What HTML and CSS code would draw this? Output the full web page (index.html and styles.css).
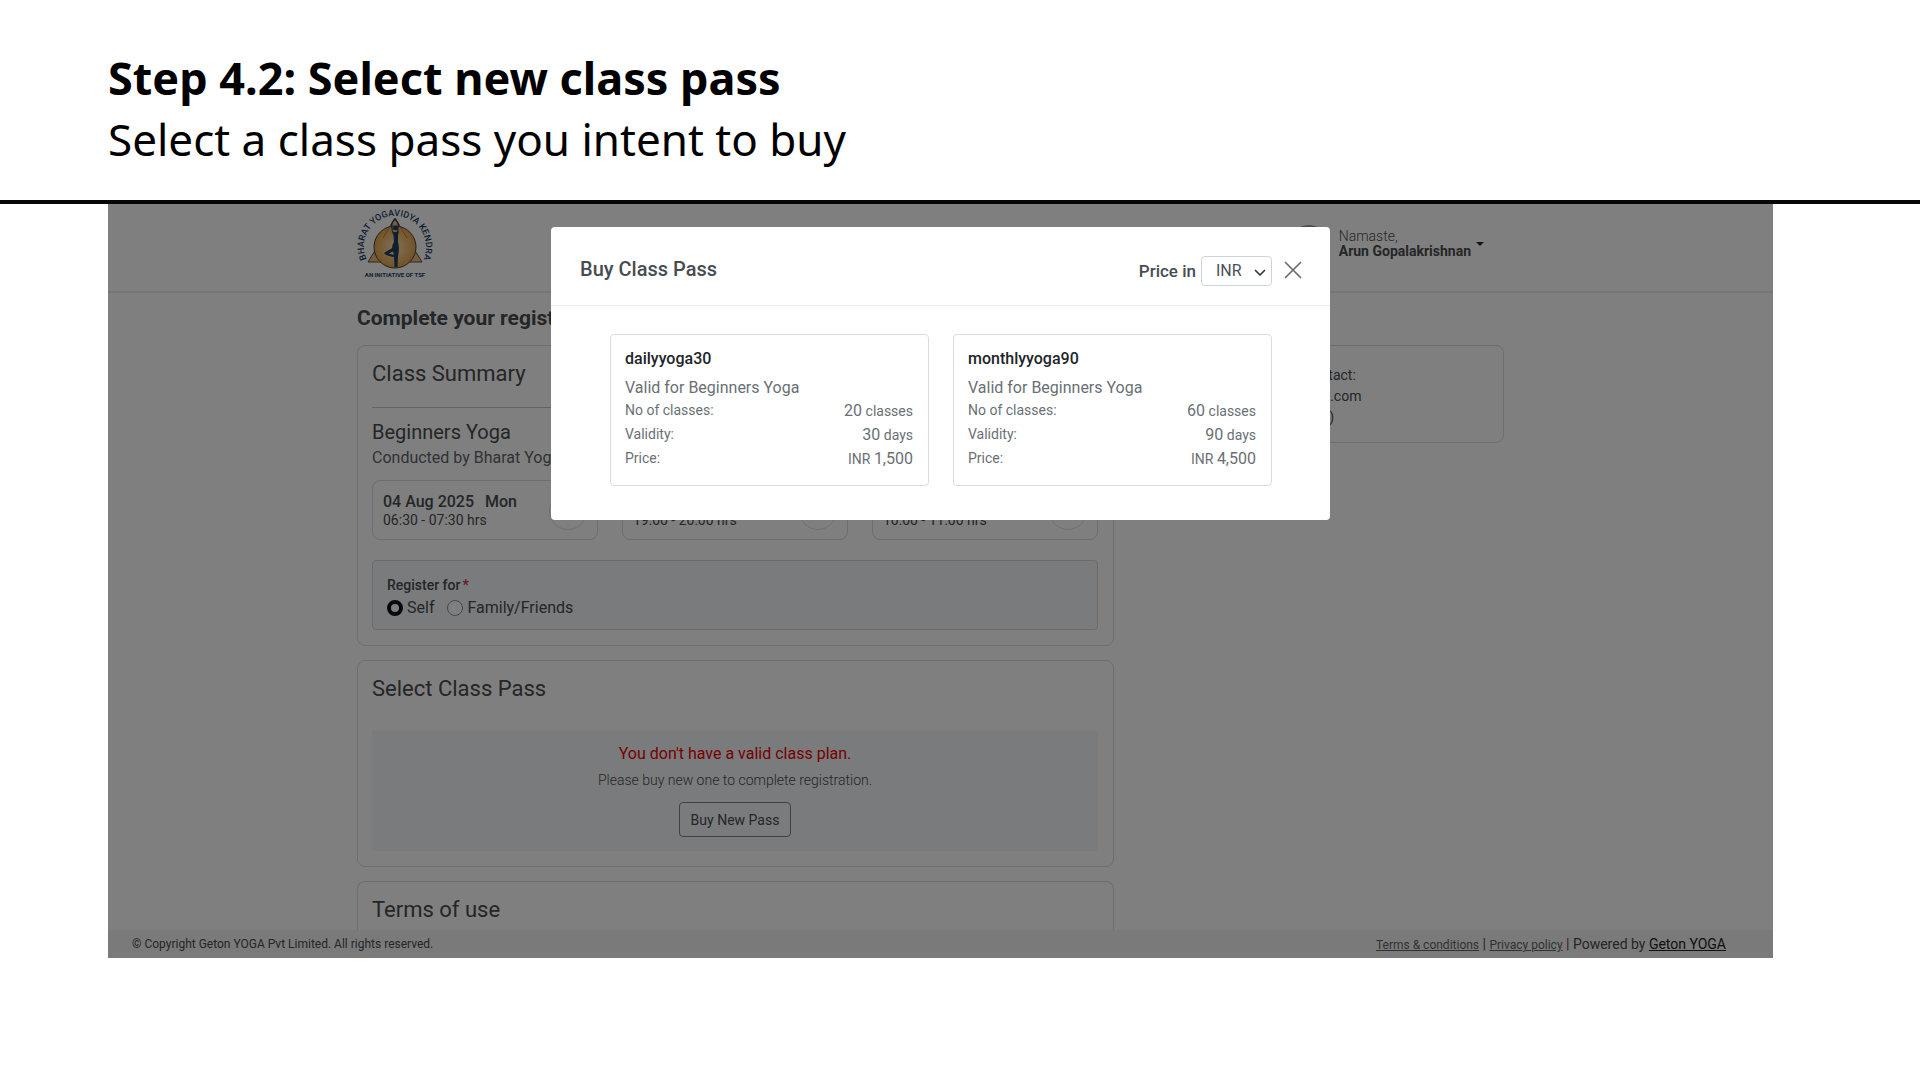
FILE: index.html
```html
<!DOCTYPE html>
<html lang="en">
<head>
<meta charset="utf-8">
<meta name="viewport" content="width=device-width, initial-scale=1">
<title>Step 4.2: Select new class pass</title>
<link rel="stylesheet" href="styles.css">
</head>
<body>
<header class="slide-head">
  <h1 class="slide-title">Step 4.2: Select new class pass</h1>
  <p class="slide-subtitle">Select a class pass you intent to buy</p>
</header>

<main class="app">
  <div class="topbar">
    <div class="container topbar-row">
      <a class="logo" href="#" aria-label="Bharat Yogavidya Kendra">
        <svg width="78" height="74" viewBox="0 0 78 74">
          <defs>
            <path id="arc" d="M11.200 56.500A31 31 0 1 1 64.800 56.500"/>
            <radialGradient id="sun"><stop offset="0" stop-color="#ffe2b0"/><stop offset="1" stop-color="#e5a54c"/></radialGradient>
          </defs>
          <path d="M38 12L65 56H11Z" fill="#e9bd80" stroke="#6d4a2c"/>
          <circle cx="38" cy="41" r="21" fill="url(#sun)" stroke="#4d4038"/>
          <path d="M38 12L50 32M38 12L26 32" fill="none" stroke="#a8713c" stroke-width=".8"/>
          <path d="M35.500 24Q33 17 38 13.500Q43 17 40.500 24" fill="none" stroke="#1d3f63" stroke-width="1.200"/>
          <circle cx="38.300" cy="22" r="2.300" fill="#1d3f63"/>
          <path d="M34.500 23Q35 27 36.500 29L37 36Q35 39 35.200 42L27 47Q29 50 37 51L37.500 61H40.500L41 50Q42.800 42 41 36L41 29Q42 27 41.500 23L39.500 26H36.500ZM36 45.500L37 49L31.500 47.400Z" fill="#1d3f63" fill-rule="evenodd"/>
          <text class="logo-arc"><textPath href="#arc" startOffset="50%" text-anchor="middle">BHARAT YOGAVIDYA KENDRA</textPath></text>
          <text class="logo-foot" x="38" y="71" text-anchor="middle">AN INITIATIVE OF TSF</text>
        </svg>
      </a>
      <div class="user">
        <span class="avatar"></span>
        <div class="user-name"><span>Namaste,</span><strong>Arun Gopalakrishnan</strong></div>
        <span class="caret"></span>
      </div>
    </div>
  </div>

  <div class="container">
    <h2 class="page-title">Complete your registration</h2>
    <div class="columns">
      <div class="main-col">
        <section class="card summary">
          <h3 class="card-title">Class Summary</h3>
          <hr class="rule">
          <h4 class="class-name">Beginners Yoga</h4>
          <p class="conducted">Conducted by Bharat Yogavidya Kendra</p>
          <div class="slots">
            <div class="slot"><div><p class="slot-date">04 Aug 2025 <span>Mon</span></p><p class="slot-time">06:30 - 07:30 hrs</p></div><span class="slot-ring"></span></div>
            <div class="slot"><div><p class="slot-date">05 Aug 2025 <span>Tue</span></p><p class="slot-time">19:00 - 20:00 hrs</p></div><span class="slot-ring"></span></div>
            <div class="slot"><div><p class="slot-date">06 Aug 2025 <span>Wed</span></p><p class="slot-time">10:00 - 11:00 hrs</p></div><span class="slot-ring"></span></div>
          </div>
          <fieldset class="register">
            <legend class="register-legend">Register for<b>*</b></legend>
            <div class="options">
              <label class="option"><input type="radio" name="who" checked>Self</label>
              <label class="option"><input type="radio" name="who">Family/Friends</label>
            </div>
          </fieldset>
        </section>
        <section class="card pass">
          <h3 class="card-title">Select Class Pass</h3>
          <div class="notice">
            <p class="notice-error">You don't have a valid class plan.</p>
            <p class="notice-hint">Please buy new one to complete registration.</p>
            <button class="buy" type="button">Buy New Pass</button>
          </div>
        </section>
        <section class="card terms"><h3 class="card-title">Terms of use</h3></section>
      </div>
      <aside class="card contact">
        <p>For registration queries, contact:</p>
        <p>E-mail : support@getonyoga.com</p>
        <p>Phone support (10am - 6pm)</p>
      </aside>
    </div>
  </div>

  <footer class="footer">
    <span>© Copyright Geton YOGA Pvt Limited. All rights reserved.</span>
    <span class="powered"><a class="small-link" href="#">Terms &amp; conditions</a> | <a class="small-link" href="#">Privacy policy</a> | Powered by <a href="#">Geton YOGA</a></span>
  </footer>

  <div class="backdrop">
    <div class="modal" role="dialog" aria-labelledby="modal-title">
      <div class="modal-head">
        <h2 class="modal-title" id="modal-title">Buy Class Pass</h2>
        <label class="price-label" for="currency">Price in</label>
        <span class="select-wrap">
          <select id="currency" class="currency"><option>INR</option><option>USD</option></select>
          <svg class="chevron" width="12" height="8" viewBox="0 0 12 8"><path d="M1.500 1.500L6 6L10.500 1.500" fill="none" stroke="#343a40" stroke-width="1.700" stroke-linecap="round" stroke-linejoin="round"/></svg>
        </span>
        <button class="close" type="button" aria-label="Close"><svg width="18" height="18" viewBox="0 0 18 18"><path d="M1.500 1.500L16.500 16.500M16.500 1.500L1.500 16.500" stroke="#6c6c6c" stroke-width="1.700" stroke-linecap="round"/></svg></button>
      </div>
      <div class="modal-body">
        <article class="plan">
          <h3 class="plan-name">dailyyoga30</h3>
          <p class="plan-valid">Valid for Beginners Yoga</p>
          <dl class="plan-rows">
            <div><dt>No of classes:</dt><dd><b>20</b> classes</dd></div>
            <div><dt>Validity:</dt><dd><b>30</b> days</dd></div>
            <div><dt>Price:</dt><dd>INR <b>1,500</b></dd></div>
          </dl>
        </article>
        <article class="plan">
          <h3 class="plan-name">monthlyyoga90</h3>
          <p class="plan-valid">Valid for Beginners Yoga</p>
          <dl class="plan-rows">
            <div><dt>No of classes:</dt><dd><b>60</b> classes</dd></div>
            <div><dt>Validity:</dt><dd><b>90</b> days</dd></div>
            <div><dt>Price:</dt><dd>INR <b>4,500</b></dd></div>
          </dl>
        </article>
      </div>
    </div>
  </div>
</main>
</body>
</html>
```
FILE: styles.css
```css
* { box-sizing: border-box; }
body { margin: 0; background: #fff; color: #212529; font-family: Roboto, "Liberation Sans", sans-serif; font-size: 16px; }
h1, h2, h3, h4, p, dl, dd { margin: 0; }
button, select, input { font: inherit; }

/* Slide heading */
.slide-head { padding: 47px 108px 31px; border-bottom: 4px solid #060808; color: #000; font-family: "Noto Sans", sans-serif; }
.slide-title { font-size: 45px; line-height: 62px; font-weight: 700; }
.slide-subtitle { font-size: 44px; line-height: 60px; font-weight: 400; }

/* App frame */
.app { position: relative; margin: 0 147px 0 108px; background: #fff; color: #484c50; }
.app .container { width: calc(100% - 498px); max-width: 1167px; margin: 0 auto; padding-right: 20px; }

.topbar { height: 89px; border-bottom: 2px solid #e9ecef; }
.topbar-row { display: flex; justify-content: space-between; align-items: flex-start; padding-top: 2px; }
.logo { display: block; }
.logo svg { display: block; overflow: visible; }
.logo-arc { font: 500 9px Roboto, sans-serif; fill: #1d3f63; }
.logo-foot { font: 700 6px Roboto, sans-serif; fill: #1d3f63; }
.user { display: flex; align-items: flex-start; padding: 18px 20px 0 0; }
.avatar { width: 40px; height: 40px; margin: 1px 10px 0 0; border-radius: 50%; background: #999; }
.user-name { display: flex; flex-direction: column; padding-top: 5px; font-size: 14px; line-height: 15px; font-weight: 300; }
.user-name strong { font-weight: 700; }
.caret { margin: 18px 0 0 5px; border: 4px solid transparent; border-top-color: #212529; border-bottom: 0; }

.page-title { padding: 13px 0 15px; font-size: 21px; line-height: 24px; font-weight: 700; }
.columns { display: flex; gap: 20px; align-items: flex-start; }
.main-col { flex: 0 0 757px; display: flex; flex-direction: column; gap: 14px; }
.card { border: 1px solid #d9dcdf; border-radius: 8px; padding: 0 15px 0 14px; }
.card-title { font-size: 22px; line-height: 26px; font-weight: 400; padding-top: 15px; }
.summary { padding-bottom: 15px; }
.rule { margin: 20px 0 9px; border: 0; border-top: 1px solid #c8c8c8; }
.class-name { padding-top: 2px; font-size: 20px; line-height: 26px; font-weight: 400; }
.conducted { padding-top: 1px; font-size: 16px; line-height: 24px; color: #5f656b; }
.slots { display: grid; grid-template-columns: repeat(3, 1fr); gap: 24px; padding-top: 10px; }
.slot { display: flex; justify-content: space-between; align-items: center; height: 60px; border: 1px solid #d9dcdf; border-radius: 8px; padding: 2px 10px 0; }
.slot-date { font-size: 16px; line-height: 18px; font-weight: 500; }
.slot-date span { margin-left: 7px; }
.slot-time { font-size: 14px; line-height: 18px; }
.slot-ring { width: 38px; height: 38px; border: 1px solid #e0e2e4; border-radius: 50%; }
.register { margin: 20px 0 0; height: 70px; border: 1px solid #d3d7db; border-radius: 4px; padding: 16px 14px 0; background: #f4f6f9; }
.register-legend { float: left; width: 100%; padding: 0; font-size: 14px; line-height: 17px; font-weight: 500; }
.register-legend b { margin-left: 2px; color: #dc3545; }
.options { display: flex; gap: 13px; clear: both; padding-top: 5px; }
.option { display: flex; align-items: center; gap: 4px; font-size: 16px; line-height: 18px; }
.option input { appearance: none; width: 16px; height: 16px; margin: 0; border: 1px solid #8b9095; border-radius: 50%; background: #fff; }
.option input:checked { border: 4px solid #0d0f12; }

.pass { padding-bottom: 15px; }
.notice { display: flex; flex-direction: column; align-items: center; margin-top: 29px; padding: 11px 0 14px; background: #f4f6f9; }
.notice-error { color: #f00000; font-size: 16px; line-height: 24px; }
.notice-hint { padding: 3px 0 11px; font-size: 14px; line-height: 22px; font-weight: 300; }
.buy { height: 35px; padding: 0 11px; border: 1px solid #7c858d; border-radius: 4px; background: transparent; color: #484c50; font-size: 14px; }
.terms { border-bottom: 0; border-radius: 8px 8px 0 0; padding-bottom: 7px; }
.contact { flex: 1; padding: 19px 20px 14px; }
.contact p { font-size: 14px; line-height: 21px; white-space: nowrap; }

.footer { display: flex; justify-content: space-between; align-items: center; height: 28px; padding: 0 47px 0 24px; background: #f4f4f4; font-size: 12px; }
.powered { font-size: 14px; }
.powered a { color: #202224; }
.powered .small-link { font-size: 12px; color: #5f656b; }

/* Modal */
.backdrop { position: absolute; inset: 0; display: flex; justify-content: center; align-items: flex-start; padding-top: 23px; background: rgba(0, 0, 0, .5); }
.modal { width: 779px; border-radius: 4px; background: #fff; }
.modal-head { display: flex; align-items: center; height: 79px; padding: 10px 28px 0 29px; border-bottom: 1px solid #ececec; }
.modal-title { flex: 1; padding-bottom: 4px; font-size: 20px; line-height: 24px; font-weight: 500; }
.price-label { margin-right: 5px; font-size: 17px; font-weight: 500; }
.select-wrap { position: relative; }
.currency { appearance: none; display: block; width: 71px; height: 30px; padding: 0 0 0 14px; border: 1px solid #ced4da; border-radius: 4px; background: #fff; color: #495057; font-size: 16px; line-height: 24px; }
.chevron { position: absolute; right: 6px; top: 13px; pointer-events: none; }
.close { display: flex; margin-left: 12px; padding: 0 0 2px; border: 0; background: none; }
.modal-body { display: grid; grid-template-columns: 1fr 1fr; gap: 24px; padding: 28px 58px 34px 59px; }
.plan { border: 1px solid #d9dcdf; border-radius: 4px; padding: 14px 15px 14px 14px; color: #6a6f74; }
.plan-name { font-size: 16px; line-height: 20px; font-weight: 500; color: #212529; }
.plan-valid { padding-top: 8px; font-size: 16px; line-height: 22px; }
.plan-rows div { display: flex; justify-content: space-between; font-size: 14px; line-height: 23px; }
.plan-rows b { font-size: 16px; font-weight: 400; }
```
